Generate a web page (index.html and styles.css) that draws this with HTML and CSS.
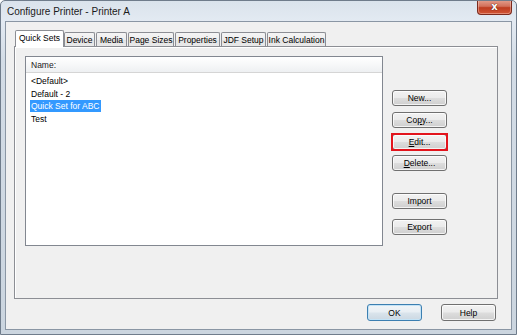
FILE: index.html
```html
<!DOCTYPE html>
<html>
<head>
<meta charset="utf-8">
<link rel="stylesheet" href="styles.css">
</head>
<body>
<div class="window">
  <div class="titlebar">
    <span class="title">Configure Printer - Printer A</span>
    <div class="close"><span class="close-x">x</span></div>
  </div>
  <div class="client">
    <div class="tabstrip">
      <div class="tab active w-quick">Quick Sets</div>
      <div class="tab w-device">Device</div>
      <div class="tab w-media">Media</div>
      <div class="tab w-page">Page Sizes</div>
      <div class="tab w-props">Properties</div>
      <div class="tab w-jdf">JDF Setup</div>
      <div class="tab w-ink">Ink Calculation</div>
    </div>
    <div class="panel">
      <div class="listbox">
        <div class="list-header">Name:</div>
        <div class="list-items">
          <div class="item"><span class="item-text">&lt;Default&gt;</span></div>
          <div class="item"><span class="item-text">Default - 2</span></div>
          <div class="item"><span class="item-text selected">Quick Set for ABC</span></div>
          <div class="item"><span class="item-text">Test</span></div>
        </div>
      </div>
      <div class="side-buttons">
        <div class="btn b-new">New...</div>
        <div class="btn b-copy">Co<u>p</u>y...</div>
        <div class="btn b-edit highlighted"><u>E</u>dit...</div>
        <div class="btn b-delete"><u>D</u>elete...</div>
        <div class="btn b-import">Import</div>
        <div class="btn b-export">Export</div>
      </div>
    </div>
    <div class="footer">
      <div class="btn default">OK</div>
      <div class="btn">Help</div>
    </div>
  </div>
</div>
</body>
</html>
```

FILE: styles.css
```css
html, body {
  margin: 0;
  padding: 0;
  background: #ffffff;
}

body {
  font-family: "Liberation Sans", Arial, sans-serif;
  font-size: 8.5px;
  color: #000;
}

.window {
  width: 517px;
  height: 335px;
  box-sizing: border-box;
  border: 1px solid #6f7c8b;
  border-radius: 5px 5px 0 0;
  background: linear-gradient(180deg, #dae3ec 0px, #e3eaf2 20px, #d3dce6 60px, #cbd5df 100%);
  display: flex;
  flex-direction: column;
  overflow: hidden;
}

.titlebar {
  height: 20px;
  display: flex;
  align-items: flex-start;
}

.title {
  font-size: 10px;
  color: #1b1b1b;
  margin-left: 6px;
  margin-top: 5px;
}

.close {
  margin-left: auto;
  margin-right: 4px;
  margin-top: -1px;
  width: 35px;
  height: 15px;
  box-sizing: border-box;
  border: 1px solid #7b2a1d;
  border-top: none;
  border-radius: 0 0 4px 4px;
  background: linear-gradient(180deg, #e3a08e 0%, #d2705a 45%, #bd3c20 55%, #d35636 100%);
  display: flex;
  align-items: center;
  justify-content: center;
  box-shadow: inset 0 0 0 1px rgba(255, 220, 210, 0.4);
}

.close-x {
  font-family: "DejaVu Sans", sans-serif;
  font-weight: bold;
  font-size: 10px;
  line-height: 10px;
  color: #ffffff;
  margin-top: -1px;
  text-shadow: 0 0 1px #5a1a10, 0 0 1px #5a1a10;
}

.client {
  flex: 1;
  margin: 0 4px 4px 4px;
  border: 1px solid #8a96a4;
  background: #f0f0f0;
  display: flex;
  flex-direction: column;
}

.tabstrip {
  display: flex;
  align-items: flex-end;
  height: 16px;
  margin-top: 8px;
  margin-left: 9px;
  position: relative;
  z-index: 2;
}

.tab {
  box-sizing: border-box;
  height: 14px;
  border: 1px solid #8c8e94;
  border-bottom: none;
  border-radius: 2px 2px 0 0;
  background: linear-gradient(180deg, #f5f5f5 0%, #eeeeee 50%, #e3e3e3 51%, #e9e9e9 100%);
  display: flex;
  align-items: center;
  justify-content: center;
  white-space: nowrap;
  color: #000;
  margin-right: 1px;
}

.tab.active {
  height: 17px;
  margin-bottom: -1px;
  background: #ffffff;
  padding-bottom: 2px;
  margin-right: 0;
}

.w-quick { width: 49px; }
.w-device { width: 31px; }
.w-media { width: 31px; }
.w-page { width: 46px; }
.w-props { width: 45px; }
.w-jdf { width: 45px; }
.w-ink { width: 59px; }

.panel {
  margin-left: 8px;
  width: 484px;
  height: 253px;
  box-sizing: border-box;
  border: 1px solid #8c8e94;
  box-shadow: inset 1px 1px 0 #ffffff;
  background: #f0f0f0;
  display: flex;
  align-items: flex-start;
  position: relative;
  z-index: 1;
}

.listbox {
  margin-left: 10px;
  margin-top: 9px;
  width: 358px;
  height: 190px;
  box-sizing: border-box;
  border: 1px solid #828790;
  background: #ffffff;
  display: flex;
  flex-direction: column;
}

.list-header {
  height: 16px;
  box-sizing: border-box;
  border-bottom: 1px solid #d5d5d5;
  background: linear-gradient(180deg, #ffffff 0%, #f7f8f9 50%, #eef0f2 100%);
  padding-left: 5px;
  display: flex;
  align-items: center;
  color: #1a1a1a;
}

.list-items {
  padding-top: 2px;
}

.item {
  height: 12.7px;
  line-height: 12.7px;
  padding-left: 4px;
}

.item-text {
  display: inline-block;
  padding: 0 1px;
  height: 12px;
  line-height: 12px;
}

.item-text.selected {
  background: #3399ff;
  color: #ffffff;
}

.side-buttons {
  margin-left: 9px;
  padding-top: 43px;
  display: flex;
  flex-direction: column;
}

.btn {
  box-sizing: border-box;
  width: 55px;
  height: 16px;
  border: 1px solid #707070;
  border-radius: 3px;
  background: linear-gradient(180deg, #f2f2f2 0%, #ebebeb 48%, #dddddd 52%, #cfcfcf 100%);
  box-shadow: inset 0 0 0 1px rgba(255, 255, 255, 0.75);
  display: flex;
  align-items: center;
  justify-content: center;
  color: #000;
  white-space: nowrap;
  position: relative;
}

.btn u {
  text-decoration: underline;
  text-underline-offset: 1px;
}

.b-copy { margin-top: 6px; }
.b-edit { margin-top: 6px; }
.b-delete { margin-top: 5px; }
.b-import { margin-top: 22px; }
.b-export { margin-top: 10px; }

.btn.highlighted::after {
  content: "";
  position: absolute;
  left: -2px;
  top: -2px;
  right: -2px;
  bottom: -2px;
  border: 2px solid #e3141c;
}

.footer {
  display: flex;
  justify-content: flex-end;
  gap: 19px;
  margin-top: 5px;
  padding-right: 15px;
}

.footer .btn {
  height: 17px;
}

.btn.default {
  border-color: #3c7fb1;
  box-shadow: inset 0 0 0 1px #c4e3f6;
  background: linear-gradient(180deg, #f1f5f8 0%, #e8eef3 48%, #dae4ec 52%, #ccd8e2 100%);
}
```
